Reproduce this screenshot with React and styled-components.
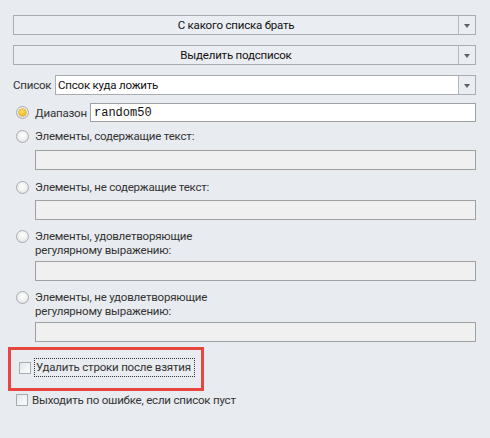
import React from "react";
import styled, { createGlobalStyle } from "styled-components";

const Global = createGlobalStyle`
  html, body { margin: 0; padding: 0; background: #e8ebef; }
  body {
    font-family: Roboto, "Open Sans", sans-serif;
    font-size: 11.5px;
    letter-spacing: -0.2px;
    color: #1e1e1e;
  }
`;

const Panel = styled.div`
  width: 490px;
  height: 438px;
  box-sizing: border-box;
  padding: 15px 14px 0 13px;
  display: flex;
  flex-direction: column;
  background: #e8ebef;
`;

const Combo = styled.div`
  height: 20px;
  box-sizing: border-box;
  border: 1px solid #a9acb0;
  background: ${(p) => (p.$white ? "#ffffff" : "#eaedf1")};
  display: flex;
  margin-top: ${(p) => p.$mt || 0}px;
  flex: ${(p) => (p.$grow ? 1 : "none")};
`;

const ComboText = styled.div`
  flex: 1;
  display: flex;
  align-items: center;
  justify-content: ${(p) => (p.$center ? "center" : "flex-start")};
  padding-left: ${(p) => (p.$center ? 0 : 2)}px;
  line-height: 18px;
  white-space: nowrap;
  color: #111;
`;

const DropButton = styled.div`
  width: 16px;
  flex: none;
  border-left: 1px solid #b4b7bb;
  background: #eaedf1;
  display: flex;
  align-items: center;
  justify-content: center;
  &::after {
    content: "";
    border-left: 3.5px solid transparent;
    border-right: 3.5px solid transparent;
    border-top: 4px solid #5e6166;
    margin-top: 1px;
  }
`;

const Row = styled.div`
  display: flex;
  align-items: center;
  margin-top: ${(p) => p.$mt || 0}px;
  padding-left: ${(p) => p.$pl || 0}px;
`;

const Label = styled.span`
  color: #333;
  width: ${(p) => p.$w}px;
  flex: none;
  white-space: nowrap;
`;

const TextInput = styled.div`
  flex: 1;
  height: 19px;
  box-sizing: border-box;
  border: 1px solid #a0a0a0;
  background: #fff;
  display: flex;
  align-items: center;
  padding-left: 3px;
  font-family: "Liberation Mono", monospace;
  font-size: 12px;
  letter-spacing: 0;
  color: #111;
`;

const DisabledField = styled.div`
  height: 20px;
  box-sizing: border-box;
  border: 1px solid #a0a0a0;
  background: #f0f0f0;
  margin-left: 22px;
  margin-top: ${(p) => p.$mt || 0}px;
`;

const Radio = styled.span`
  width: 13px;
  height: 13px;
  box-sizing: border-box;
  border-radius: 50%;
  border: 1px solid #a8abaf;
  background: radial-gradient(circle at 50% 40%, #ffffff 0%, #f2f2f2 45%, #d6d8db 100%);
  flex: none;
  display: flex;
  align-items: center;
  justify-content: center;
  margin-right: 6px;
  ${(p) =>
    p.$checked &&
    `
    &::after {
      content: "";
      width: 7px;
      height: 7px;
      border-radius: 50%;
      background: radial-gradient(circle at 45% 40%, #ffe98a 0%, #f9c628 45%, #e89a0c 100%);
      box-shadow: 0 0 0 0.5px #d88a00;
    }
  `}
`;

const OptionLabel = styled.div`
  display: flex;
  align-items: flex-start;
  margin-top: ${(p) => p.$mt || 0}px;
  padding-left: 3px;
  line-height: 14px;
  color: #333;
  ${Radio} { margin-top: 1px; }
`;

const Check = styled.span`
  width: 12px;
  height: 12px;
  box-sizing: border-box;
  border: 1px solid #a8abaf;
  background: linear-gradient(135deg, #e2e4e7 0%, #f4f5f6 60%, #fbfbfb 100%);
  flex: none;
  margin-right: 4px;
`;

const CheckRow = styled.div`
  display: flex;
  align-items: center;
  margin-top: ${(p) => p.$mt || 0}px;
  padding-left: 3px;
  color: #333;
  white-space: nowrap;
`;

const FocusText = styled.span`
  outline: 1px dotted #333;
  outline-offset: 0;
  padding: 1px 3px 2px 1px;
  line-height: 14px;
  white-space: nowrap;
`;

const Highlight = styled.div`
  width: 196px;
  height: 44px;
  box-sizing: border-box;
  border: 3px solid #e8473f;
  margin-left: -5px;
  margin-top: 5px;
  display: flex;
  align-items: center;
  padding: 0 0 3px 5px;
`;

export default function App() {
  return (
    <>
      <Global />
      <Panel>
        <Combo>
          <ComboText $center>С какого списка брать</ComboText>
          <DropButton />
        </Combo>
        <Combo $mt={10}>
          <ComboText $center>Выделить подсписок</ComboText>
          <DropButton />
        </Combo>
        <Row $mt={10}>
          <Label $w={42}>Список</Label>
          <Combo $white $grow>
            <ComboText>Спсок куда ложить</ComboText>
            <DropButton />
          </Combo>
        </Row>
        <Row $mt={8} $pl={3}>
          <Radio $checked />
          <Label $w={55}>Диапазон</Label>
          <TextInput>random50</TextInput>
        </Row>

        <OptionLabel $mt={7}>
          <Radio />
          <span>Элементы, содержащие текст:</span>
        </OptionLabel>
        <DisabledField $mt={7} />

        <OptionLabel $mt={10}>
          <Radio />
          <span>Элементы, не содержащие текст:</span>
        </OptionLabel>
        <DisabledField $mt={6} />

        <OptionLabel $mt={9}>
          <Radio />
          <span>
            Элементы, удовлетворяющие
            <br />
            регулярному выражению:
          </span>
        </OptionLabel>
        <DisabledField $mt={4} />

        <OptionLabel $mt={9}>
          <Radio />
          <span>
            Элементы, не удовлетворяющие
            <br />
            регулярному выражению:
          </span>
        </OptionLabel>
        <DisabledField $mt={4} />

        <Highlight>
          <CheckRow>
            <Check />
            <FocusText>Удалить строки после взятия</FocusText>
          </CheckRow>
        </Highlight>
        <CheckRow $mt={2}>
          <Check />
          <span>Выходить по ошибке, если список пуст</span>
        </CheckRow>
      </Panel>
    </>
  );
}
